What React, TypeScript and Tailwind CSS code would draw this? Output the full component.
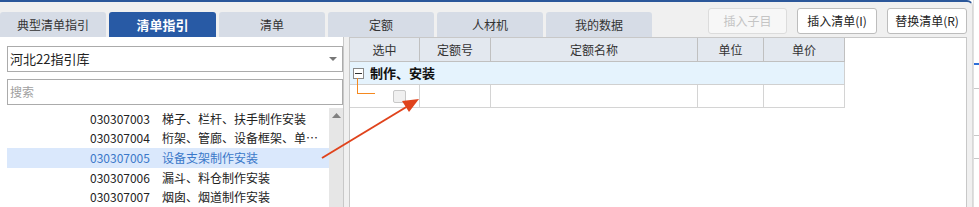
import React from "react";

const tabs = ["典型清单指引", "清单指引", "清单", "定额", "人材机", "我的数据"];

const rows = [
  { code: "030307003", name: "梯子、栏杆、扶手制作安装" },
  { code: "030307004", name: "桁架、管廊、设备框架、单…" },
  { code: "030307005", name: "设备支架制作安装", active: true },
  { code: "030307006", name: "漏斗、料仓制作安装" },
  { code: "030307007", name: "烟囱、烟道制作安装" },
];

const columns = [
  { label: "选中", w: "w-[70px]" },
  { label: "定额号", w: "w-[71px]" },
  { label: "定额名称", w: "w-[207px]" },
  { label: "单位", w: "w-[66px]" },
  { label: "单价", w: "w-[81px]" },
];

export default function App() {
  return (
    <div
      className="relative flex w-[979px] h-[207px] overflow-hidden bg-white text-[12px] text-[#222]"
      style={{ fontFamily: '"Noto Sans CJK SC", "Microsoft YaHei", sans-serif' }}
    >
      {/* main window */}
      <div className="flex flex-col w-[973px] h-full bg-[#f0f0f0] border-t-2 border-[#2b579a] rounded-tr-[6px] border-r border-r-[#d8d8d8]">
        {/* tabs + buttons */}
        <div className="flex items-start h-[35px] pr-[5px]">
          <div className="flex gap-[3px] mt-[10px]">
            {tabs.map((t, i) => (
              <div
                key={t}
                className={
                  i === 1
                    ? "w-[107px] h-[25px] flex items-center justify-center rounded-t-[3px] bg-[#285aa5] text-white font-bold text-[13px]"
                    : "w-[106px] h-[25px] flex items-center justify-center rounded-t-[3px] bg-[#d6dce6] text-[#333]"
                }
              >
                {t}
              </div>
            ))}
          </div>
          <div className="flex gap-[10px] ml-auto mt-[6px]">
            <button className="w-[79px] h-[26px] rounded-[3px] border border-[#dcdcdc] bg-[#f7f7f7] text-[#c4c4c4]">
              插入子目
            </button>
            <button className="w-[80px] h-[26px] rounded-[3px] border border-[#bdbdbd] bg-white text-[#222]">
              插入清单(I)
            </button>
            <button className="w-[80px] h-[26px] rounded-[3px] border border-[#bdbdbd] bg-white text-[#222]">
              替换清单(R)
            </button>
          </div>
        </div>

        {/* body */}
        <div className="flex flex-1 min-h-0">
          {/* left panel */}
          <div className="flex flex-col w-[344px] bg-white pl-[7px] pt-[9px] border-r border-[#c8c8c8]">
            <div className="flex items-center h-[26px] border border-[#ababab] px-[2px] text-[13px]">
              <span className="flex-1">河北22指引库</span>
              <svg width="8" height="4" viewBox="0 0 8 4" className="mr-[3px]">
                <path d="M0 0h8L4 4z" fill="#777" />
              </svg>
            </div>
            <div className="flex items-center h-[26px] mt-[7px] border border-[#ababab] px-[2px] text-[#a0a0a0]">
              搜索
            </div>
            <div className="flex flex-1 mt-[3px] min-h-0">
              <div className="flex-1 flex flex-col pt-[1px]">
                {rows.map((r) => (
                  <div
                    key={r.code}
                    className={
                      r.active
                        ? "flex items-center h-[20px] pl-[83px] bg-[#dae8fc] text-[#3b78c9]"
                        : "flex items-center h-[20px] pl-[83px]"
                    }
                  >
                    <span className="w-[72px]">{r.code}</span>
                    <span className="whitespace-nowrap">{r.name}</span>
                  </div>
                ))}
              </div>
              <div className="w-[14px] bg-[#e6e6e6] flex justify-center pt-[5px]">
                <svg width="9" height="5" viewBox="0 0 9 5">
                  <path d="M0 5L4.5 0L9 5z" fill="#808080" />
                </svg>
              </div>
            </div>
          </div>

          {/* right panel */}
          <div className="w-[5px]" />
          <div className="flex-1 bg-white border-l border-t border-r border-[#c8c8c8] mr-[5px] relative">
            <div className="flex flex-col w-[495px]">
              <div className="flex h-[24px] bg-[#e3e8ef] border-b border-[#c0c0c0]">
                {columns.map((c) => (
                  <div
                    key={c.label}
                    className={`${c.w} flex items-center justify-center border-r border-[#c0c0c0] text-[#333]`}
                  >
                    {c.label}
                  </div>
                ))}
              </div>
              <div className="flex items-center h-[23px] bg-[#e5f3fd] border-b border-r border-[#d0d0d0] pl-[3px]">
                <div className="w-[11px] h-[11px] border border-[#888] bg-white flex items-center justify-center">
                  <div className="w-[7px] h-[1px] bg-[#333]" />
                </div>
                <span className="ml-[6px] font-bold text-[13px] text-[#111]">制作、安装</span>
              </div>
              <div className="flex h-[23px] border-b border-[#d4d4d4]">
                {columns.map((c, i) => (
                  <div
                    key={c.label}
                    className={`${c.w} relative border-r border-[#d4d4d4]`}
                  >
                    {i === 0 && (
                      <>
                        <div className="absolute left-[7px] top-[-7px] w-[18px] h-[16px] border-l border-b border-[#f5891f]" />
                        <div className="absolute left-[43px] top-[5px] w-[13px] h-[13px] rounded-[2px] border border-[#c8c8c8] bg-[#f0f0f0]" />
                      </>
                    )}
                  </div>
                ))}
              </div>
            </div>
          </div>
        </div>
      </div>

      {/* window behind */}
      <div className="flex-1 relative bg-white border-l border-[#e0e0e0]">
        <div className="absolute left-0 right-0 top-[63px] h-[2px] bg-[#2f6fd8]" />
        <div className="absolute left-0 right-0 top-[88px] h-[1px] bg-[#c8c8c8]" />
        <div className="absolute left-0 right-0 top-[135px] h-[1px] bg-[#c8c8c8]" />
        <div className="absolute left-0 right-0 top-[158px] h-[1px] bg-[#c8c8c8]" />
      </div>

      {/* annotation arrow */}
      <svg
        className="absolute left-0 top-0 pointer-events-none"
        width="979"
        height="207"
        viewBox="0 0 979 207"
      >
        <line x1="322" y1="158" x2="408" y2="106" stroke="#e0431c" strokeWidth="2" />
        <path d="M419 99L402 101L409 112z" fill="#e0431c" />
      </svg>
    </div>
  );
}
